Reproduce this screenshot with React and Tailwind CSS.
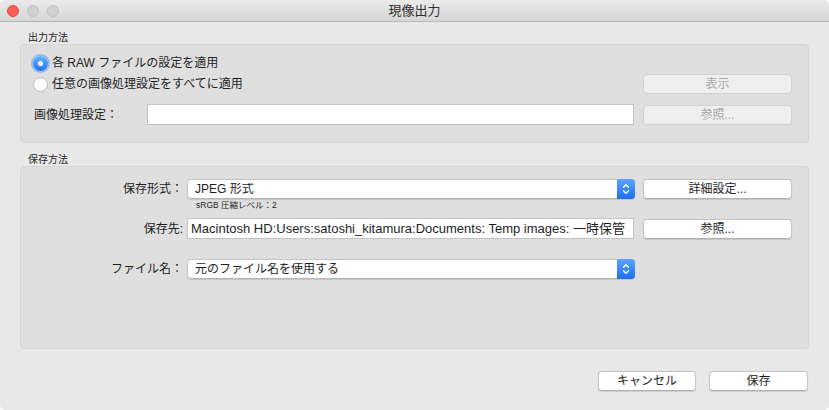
import React from "react";

const FONT = "font-['Liberation_Sans','Noto_Sans_CJK_JP',sans-serif]";

function Stepper() {
  return (
    <div className="w-[18px] self-stretch -my-px -mr-px rounded-r-[4px] bg-gradient-to-b from-[#5aa3fb] to-[#1f6ff2] flex items-center justify-center">
      <svg width="8" height="12" viewBox="0 0 8 12" fill="none" stroke="white" strokeWidth="1.4" strokeLinecap="round" strokeLinejoin="round">
        <path d="M1.5 4.2 L4 1.7 L6.5 4.2" />
        <path d="M1.5 7.8 L4 10.3 L6.5 7.8" />
      </svg>
    </div>
  );
}

function Popup({ children }) {
  return (
    <div className="flex-1 h-[20px] bg-white rounded-[4px] border border-[#c6c6c6] border-b-[#b4b4b4] shadow-[0_0.5px_1px_rgba(0,0,0,0.12)] flex items-center">
      <div className="flex-1 pl-[7px] text-[12px] text-[#1e1e1e] leading-none whitespace-nowrap overflow-hidden">{children}</div>
      <Stepper />
    </div>
  );
}

function Button({ children, disabled, className = "" }) {
  return (
    <div
      className={`h-[20px] rounded-[4px] border flex items-center justify-center text-[12px] leading-none ${
        disabled
          ? "bg-[#efefef] border-[#d2d2d2] text-[#a8a8a8]"
          : "bg-white border-[#c5c5c5] border-b-[#b0b0b0] text-[#1e1e1e] shadow-[0_0.5px_1px_rgba(0,0,0,0.12)]"
      } ${className}`}
    >
      {children}
    </div>
  );
}

function Radio({ checked }) {
  if (checked) {
    return (
      <div className="w-[15px] h-[15px] rounded-full bg-gradient-to-b from-[#6cb3fa] to-[#1d6ff2] shadow-[0_0_0_2px_rgba(90,155,245,0.55)] flex items-center justify-center shrink-0">
        <div className="w-[5px] h-[5px] rounded-full bg-white" />
      </div>
    );
  }
  return <div className="w-[15px] h-[15px] rounded-full bg-white border border-[#b9b9b9] shrink-0" />;
}

export default function App() {
  return (
    <div className={`w-[829px] h-[410px] bg-white ${FONT}`}>
      <div className="w-full h-full rounded-[5px] overflow-hidden bg-[#e8e8e8] flex flex-col">
        {/* Title bar */}
        <div className="h-[22px] shrink-0 bg-gradient-to-b from-[#ebebeb] to-[#d6d6d6] border-b border-[#b5b5b5] flex items-center relative">
          <div className="flex items-center gap-[8px] pl-[7px]">
            <div className="w-[12px] h-[12px] rounded-full bg-[#fc5f57] border border-[#df4744]" />
            <div className="w-[12px] h-[12px] rounded-full bg-[#d0d0d0] border border-[#c0c0c0]" />
            <div className="w-[12px] h-[12px] rounded-full bg-[#d0d0d0] border border-[#c0c0c0]" />
          </div>
          <div className="absolute inset-0 flex items-center justify-center text-[13px] text-[#2e2e2e] pointer-events-none">現像出力</div>
        </div>

        <div className="px-[20px] flex flex-col">
          {/* Section 1 label */}
          <div className="mt-[9px] h-[13px] pl-[8px] text-[10px] leading-[13px] text-[#262626]">出力方法</div>
          {/* Box 1 */}
          <div className="h-[99px] rounded-[4px] bg-[#dfdfdf] border border-[#d5d5d5] pt-[8px] pl-[12px] pr-[16px] flex flex-col">
            <div className="h-[20px] flex items-center gap-[4px]">
              <Radio checked />
              <span className="text-[12px] text-[#1e1e1e] leading-none">各 RAW ファイルの設定を適用</span>
            </div>
            <div className="h-[20px] mt-px flex items-center">
              <div className="flex-1 flex items-center gap-[4px]">
                <Radio />
                <span className="text-[12px] text-[#1e1e1e] leading-none">任意の画像処理設定をすべてに適用</span>
              </div>
              <Button disabled className="w-[149px]">表示</Button>
            </div>
            <div className="h-[21px] mt-[10px] flex items-center">
              <span className="pl-[1px] w-[114px] text-[12px] text-[#1e1e1e] leading-none">画像処理設定：</span>
              <div className="flex-1 h-[21px] bg-white border border-[#c3c3c3]" />
              <Button disabled className="w-[149px] ml-[9px] h-[20px]">参照...</Button>
            </div>
          </div>

          {/* Section 2 label */}
          <div className="mt-[10px] h-[13px] pl-[8px] text-[10px] leading-[13px] text-[#262626]">保存方法</div>
          {/* Box 2 */}
          <div className="h-[183px] rounded-[4px] bg-[#dfdfdf] border border-[#d5d5d5] pt-[12px] pr-[16px] flex flex-col">
            <div className="h-[20px] flex items-center">
              <span className="w-[166px] pr-[4px] text-right text-[12px] text-[#1e1e1e] leading-none whitespace-nowrap">保存形式：</span>
              <Popup>JPEG 形式</Popup>
              <Button className="w-[149px] ml-[8px]">詳細設定...</Button>
            </div>
            <div className="h-[12px] pl-[175px] text-[8.5px] leading-[12px] text-[#262626]">sRGB 圧縮レベル：2</div>
            <div className="h-[21px] mt-[7px] flex items-center">
              <span className="w-[166px] pr-[4px] text-right text-[12px] text-[#1e1e1e] leading-none whitespace-nowrap">保存先:</span>
              <div className="flex-1 h-[21px] bg-white border border-[#c3c3c3] pl-[3px] flex items-center overflow-hidden">
                <span className="text-[13px] text-[#1e1e1e] leading-none whitespace-nowrap">Macintosh HD:Users:satoshi_kitamura:Documents: Temp images: 一時保管</span>
              </div>
              <Button className="w-[149px] ml-[9px]">参照...</Button>
            </div>
            <div className="h-[20px] mt-[20px] flex items-center">
              <span className="w-[166px] pr-[4px] text-right text-[12px] text-[#1e1e1e] leading-none whitespace-nowrap">ファイル名：</span>
              <Popup>元のファイル名を使用する</Popup>
              <div className="w-[157px]" />
            </div>
          </div>

          {/* Bottom buttons */}
          <div className="mt-[22px] flex justify-end gap-[13px] pr-[1px]">
            <Button className="w-[98px]">キャンセル</Button>
            <Button className="w-[99px]">保存</Button>
          </div>
        </div>
      </div>
    </div>
  );
}
